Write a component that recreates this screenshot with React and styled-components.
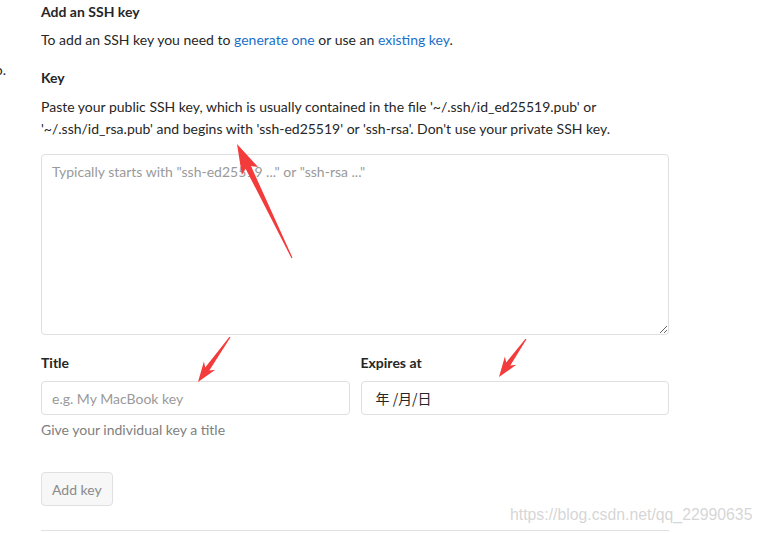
import React from "react";
import styled, { createGlobalStyle } from "styled-components";

const GlobalStyle = createGlobalStyle`
  html, body {
    margin: 0;
    padding: 0;
    background: #fff;
  }
  body {
    font-family: Lato, "Noto Sans", "Noto Sans CJK SC", sans-serif;
    font-size: 14px;
    color: #262626;
    overflow: hidden;
  }
`;

const Page = styled.div`
  position: relative;
  width: 763px;
  height: 533px;
  overflow: hidden;
  display: grid;
  grid-template-columns: 41px 628px;
  align-items: start;
`;

const Side = styled.div`
  overflow: hidden;
  white-space: nowrap;
  display: flex;
  justify-content: flex-end;
  padding-top: 60px;
  padding-right: 35px;
  line-height: 20px;
`;

const Main = styled.div`
  display: flex;
  flex-direction: column;
`;

const Heading = styled.h4`
  margin: ${(p) => p.$mt ?? 2}px 0 0;
  font-size: 14px;
  font-weight: 700;
  line-height: 20px;
`;

const Text = styled.p`
  margin: ${(p) => p.$mt || 0}px 0 0;
  line-height: 22px;
`;

const Link = styled.a`
  color: #1b6fc8;
  text-decoration: none;
`;

const Label = styled.label`
  display: block;
  font-weight: 700;
  line-height: 20px;
  margin-bottom: 8px;
`;

const TextArea = styled.textarea`
  box-sizing: border-box;
  width: 628px;
  height: 181px;
  margin: 14px 0 0;
  padding: 7px 10px;
  border: 1px solid #dfdfdf;
  border-radius: 4px;
  font: inherit;
  line-height: 20px;
  color: #262626;
  outline: none;
  resize: vertical;
  display: block;
  &::placeholder {
    color: #9a9a9a;
  }
`;

const Row = styled.div`
  display: grid;
  grid-template-columns: 1fr 1fr;
  gap: 11px;
  margin-top: 18px;
`;

const Field = styled.div`
  display: flex;
  flex-direction: column;
`;

const Input = styled.input`
  box-sizing: border-box;
  width: 100%;
  height: 34px;
  padding: 6px 10px;
  border: 1px solid #dfdfdf;
  border-radius: 4px;
  font: inherit;
  color: #262626;
  outline: none;
  &::placeholder {
    color: #9a9a9a;
  }
`;

const DateBox = styled.div`
  box-sizing: border-box;
  height: 34px;
  padding: 0 14px;
  border: 1px solid #dfdfdf;
  border-radius: 4px;
  display: flex;
  align-items: center;
  font-family: "Noto Sans CJK SC", sans-serif;
  color: #262626;
  white-space: pre;
`;

const Help = styled.p`
  margin: 5px 0 0;
  color: #808080;
  line-height: 20px;
`;

const Button = styled.button`
  align-self: flex-start;
  margin-top: 32px;
  height: 34px;
  padding: 0 10px;
  border: 1px solid #e0e0e0;
  border-radius: 4px;
  background: #f7f7f7;
  color: #8a8a8a;
  font: inherit;
`;

const Divider = styled.hr`
  margin: 24px 0 0;
  border: 0;
  border-top: 1px solid #e1e1e1;
`;

const Watermark = styled.div`
  position: absolute;
  left: 510px;
  top: 506px;
  font-family: "Liberation Sans", Arial, sans-serif;
  font-size: 15.8px;
  color: rgba(200, 200, 200, 0.75);
  white-space: nowrap;
  pointer-events: none;
`;

const Overlay = styled.svg`
  position: absolute;
  left: 0;
  top: 0;
  pointer-events: none;
`;

function arrow(tx, ty, sx, sy, head = 26, wing = 9, tailW = 1.5, neck = 4) {
  const dx = tx - sx;
  const dy = ty - sy;
  const len = Math.hypot(dx, dy);
  const ux = dx / len;
  const uy = dy / len;
  const nx = -uy;
  const ny = ux;
  const bx = tx - ux * head;
  const by = ty - uy * head;
  const p = (x, y) => `${x.toFixed(1)},${y.toFixed(1)}`;
  return [
    p(sx + nx * tailW * 0.3, sy + ny * tailW * 0.3),
    p(bx + ux * 4 + nx * neck, by + uy * 4 + ny * neck),
    p(bx + nx * wing, by + ny * wing),
    p(tx, ty),
    p(bx - nx * wing, by - ny * wing),
    p(bx + ux * 4 - nx * neck, by + uy * 4 - ny * neck),
    p(sx - nx * tailW * 0.3, sy - ny * tailW * 0.3),
  ].join(" ");
}

export default function App() {
  return (
    <>
      <GlobalStyle />
      <Page>
        <Side>Learn more about how to.</Side>
        <Main>
          <Heading>Add an SSH key</Heading>
          <Text $mt={7}>
            To add an SSH key you need to <Link href="#">generate one</Link>{" "}
            or use an <Link href="#">existing key</Link>.
          </Text>
          <Heading as="h5" $mt={17}>
            Key
          </Heading>
          <Text $mt={8}>
            Paste your public SSH key, which is usually contained in the file
            '~/.ssh/id_ed25519.pub' or '~/.ssh/id_rsa.pub' and begins with
            'ssh-ed25519' or 'ssh-rsa'. Don't use your private SSH key.
          </Text>
          <TextArea placeholder={'Typically starts with "ssh-ed25519 ..." or "ssh-rsa ..."'} />
          <Row>
            <Field>
              <Label>Title</Label>
              <Input placeholder="e.g. My MacBook key" />
              <Help>Give your individual key a title</Help>
            </Field>
            <Field>
              <Label>Expires at</Label>
              <DateBox>{"年 /月/日"}</DateBox>
            </Field>
          </Row>
          <Button>Add key</Button>
          <Divider />
        </Main>
        <Watermark>https://blog.csdn.net/qq_22990635</Watermark>
        <Overlay width="763" height="533" viewBox="0 0 763 533">
          <g fill="#f43b3b">
            <polygon points={arrow(237, 144, 292, 258, 30, 9, 2, 3)} />
            <polygon points={arrow(198, 382, 230, 337, 20, 7, 2, 2.5)} />
            <polygon points={arrow(499, 377, 526, 339, 20, 7, 2, 2.5)} />
          </g>
        </Overlay>
      </Page>
    </>
  );
}
